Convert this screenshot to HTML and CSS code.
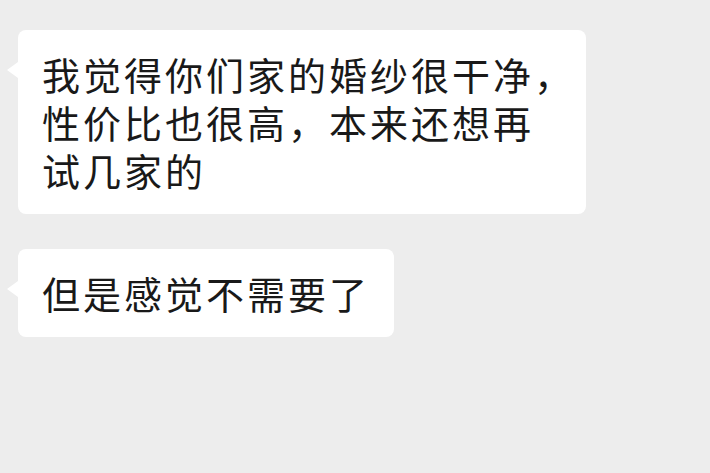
FILE: index.html
```html
<!DOCTYPE html>
<html lang="zh-CN">
<head>
    <meta charset="UTF-8">
    <meta name="viewport" content="width=device-width, initial-scale=1.0">
    <title>聊天</title>
    <link rel="stylesheet" href="styles.css">
</head>
<body>

    <div class="chat">
        <div class="msg">
            <div class="bubble">我觉得你们家的婚纱很干净<span class="hang">，</span>性价比也很高，本来还想再试几家的</div>
        </div>
        <div class="msg">
            <div class="bubble">但是感觉不需要了</div>
        </div>
    </div>

</body>
</html>
```

FILE: styles.css
```css
body {
    margin: 0;
    background-color: #ededed;
    font-family: "Noto Sans CJK SC", "Noto Sans", sans-serif;
}
.chat {
    display: flex;
    flex-direction: column;
    align-items: flex-start;
    gap: 35px;
    padding: 30px 0 0 18px;
}
.msg {
    position: relative;
    max-width: 568px;
}
.bubble {
    background: white;
    color: #191919;
    font-size: 38px;
    line-height: 48px;
    letter-spacing: 3px;
    padding: 20px 24px;
    border-radius: 8px;
}
/* comma at the end of a line takes only half its width */
.hang {
    letter-spacing: -16px;
}
/* little arrow on the left */
.msg::before {
    content: "";
    position: absolute;
    left: -11px;
    top: 32px;
    border-top: 8px solid transparent;
    border-bottom: 8px solid transparent;
    border-right: 11px solid white;
}
```
